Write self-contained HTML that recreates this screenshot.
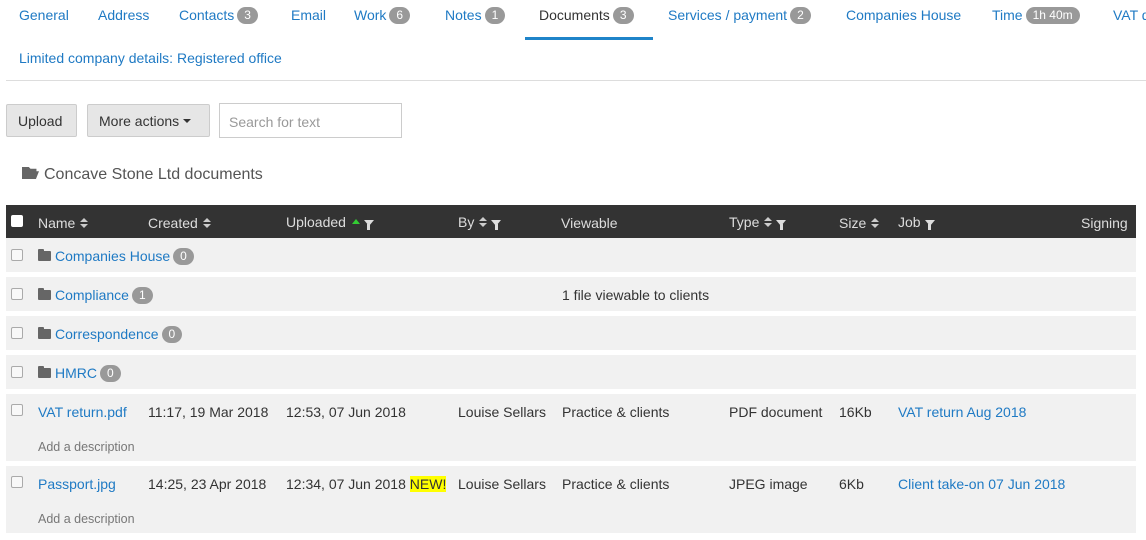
<!DOCTYPE html>
<html><head><meta charset="utf-8"><style>
*{margin:0;padding:0;box-sizing:border-box}
body{width:1146px;height:540px;overflow:hidden;background:#fff;font-family:"Liberation Sans",sans-serif;font-size:14px;color:#333;position:relative}
.a{position:absolute;white-space:nowrap;line-height:18px}
.l{color:#1f7ac4}
.b{display:inline-block;background:#999;color:#fff;border-radius:9px;font-size:12px;padding:0 7px;line-height:17px;vertical-align:1px;margin-left:3px}
.row{position:absolute;left:6px;width:1130px;background:#f1f1f1}
.cb{position:absolute;width:12px;height:12px;border:1px solid #aaa;border-radius:2px;background:#f8f8f8}
.h{color:#ddd}
.fold{display:inline-block;width:13px;height:10px;background:#666;border-radius:1px;margin-right:4px;vertical-align:0px;position:relative}
.fold:before{content:"";position:absolute;left:0;top:-2px;width:6px;height:3px;background:#666;border-radius:1px 1px 0 0}
.s{display:inline-block;width:8px;height:11px;margin-left:5px;vertical-align:-1px;position:relative}
.s:before{content:"";position:absolute;left:0;top:0;border-left:4px solid transparent;border-right:4px solid transparent;border-bottom:4px solid #ccc}
.s:after{content:"";position:absolute;left:0;top:6px;border-left:4px solid transparent;border-right:4px solid transparent;border-top:4px solid #ccc}
.f{display:inline-block;width:0;height:0;border-left:5px solid transparent;border-right:5px solid transparent;border-top:6px solid #ddd;margin-left:4px;vertical-align:1px;position:relative}
.f:after{content:"";position:absolute;left:-1.5px;top:-2px;width:3px;height:6px;background:#ddd}
.d{color:#777;font-size:12.5px}
</style></head><body>
<div class="a l" style="left:19px;top:6px">General</div>
<div class="a l" style="left:98px;top:6px">Address</div>
<div class="a l" style="left:179px;top:6px">Contacts<span class="b">3</span></div>
<div class="a l" style="left:291px;top:6px">Email</div>
<div class="a l" style="left:354px;top:6px">Work<span class="b">6</span></div>
<div class="a l" style="left:445px;top:6px">Notes<span class="b">1</span></div>
<div class="a" style="left:539px;top:6px;color:#333">Documents<span class="b">3</span></div>
<div style="position:absolute;left:525px;top:37px;width:128px;height:3px;background:#1f84c9"></div>
<div class="a l" style="left:668px;top:6px">Services / payment<span class="b">2</span></div>
<div class="a l" style="left:846px;top:6px">Companies House</div>
<div class="a l" style="left:992px;top:6px">Time<span class="b">1h 40m</span></div>
<div class="a l" style="left:1113px;top:6px">VAT d</div>
<div class="a l" style="left:19px;top:49px">Limited company details: Registered office</div>
<div style="position:absolute;left:6px;top:80px;width:1140px;height:1px;background:#ddd"></div>
<div style="position:absolute;left:6px;top:104px;width:71px;height:33px;background:#e6e6e6;border:1px solid #ccc;border-radius:2px"></div>
<div class="a" style="left:18px;top:112px">Upload</div>
<div style="position:absolute;left:87px;top:104px;width:123px;height:33px;background:#e6e6e6;border:1px solid #ccc;border-radius:2px"></div>
<div class="a" style="left:99px;top:112px">More actions <span style="display:inline-block;border-left:4px solid transparent;border-right:4px solid transparent;border-top:4px solid #333;vertical-align:3px"></span></div>
<div style="position:absolute;left:219px;top:103px;width:183px;height:35px;border:1px solid #ccc"></div>
<div class="a" style="left:229px;top:113px;color:#999">Search for text</div>
<div class="a" style="left:22px;top:165px;font-size:16px;color:#555;line-height:20px"><span style="display:inline-block;width:17px;height:12px;background:#666;margin-right:5px;vertical-align:0;clip-path:polygon(0 0,40% 0,50% 15%,85% 15%,85% 35%,100% 35%,82% 100%,0 100%)"></span>Concave Stone Ltd documents</div>
<div style="position:absolute;left:6px;top:205px;width:1130px;height:33px;background:#333"></div>
<div class="cb" style="left:11px;top:215px;background:#fff;border-color:#fff"></div>
<div class="a h" style="left:38px;top:214px">Name<span class="s"></span></div>
<div class="a h" style="left:148px;top:214px">Created<span class="s"></span></div>
<div class="a h" style="left:286px;top:213px">Uploaded <span style="display:inline-block;border-left:4px solid transparent;border-right:4px solid transparent;border-bottom:5px solid #3c3;vertical-align:3px;margin-left:2px"></span><span class="f"></span></div>
<div class="a h" style="left:458px;top:213px">By<span class="s"></span><span class="f"></span></div>
<div class="a h" style="left:561px;top:214px">Viewable</div>
<div class="a h" style="left:729px;top:213px">Type<span class="s"></span><span class="f"></span></div>
<div class="a h" style="left:839px;top:214px">Size<span class="s"></span></div>
<div class="a h" style="left:898px;top:213px">Job<span class="f"></span></div>
<div class="a h" style="left:1081px;top:214px">Signing</div>

<div class="row" style="top:238px;height:34px"></div>
<div class="cb" style="left:11px;top:249px"></div>
<div class="a l" style="left:38px;top:247px"><span class="fold"></span>Companies House<span class="b">0</span></div>
<div class="row" style="top:277px;height:34px"></div>
<div class="cb" style="left:11px;top:288px"></div>
<div class="a l" style="left:38px;top:286px"><span class="fold"></span>Compliance<span class="b">1</span></div>
<div class="a" style="left:562px;top:286px">1 file viewable to clients</div>
<div class="row" style="top:316px;height:34px"></div>
<div class="cb" style="left:11px;top:327px"></div>
<div class="a l" style="left:38px;top:325px"><span class="fold"></span>Correspondence<span class="b">0</span></div>
<div class="row" style="top:355px;height:34px"></div>
<div class="cb" style="left:11px;top:366px"></div>
<div class="a l" style="left:38px;top:364px"><span class="fold"></span>HMRC<span class="b">0</span></div>

<div class="row" style="top:394px;height:67px"></div>
<div class="cb" style="left:11px;top:404px"></div>
<div class="a l" style="left:38px;top:403px">VAT return.pdf</div>
<div class="a" style="left:148px;top:403px">11:17, 19 Mar 2018</div>
<div class="a" style="left:286px;top:403px">12:53, 07 Jun 2018</div>
<div class="a" style="left:458px;top:403px">Louise Sellars</div>
<div class="a" style="left:562px;top:403px">Practice &amp; clients</div>
<div class="a" style="left:729px;top:403px">PDF document</div>
<div class="a" style="left:839px;top:403px">16Kb</div>
<div class="a l" style="left:898px;top:403px">VAT return Aug 2018</div>
<div class="a d" style="left:38px;top:438px">Add a description</div>

<div class="row" style="top:466px;height:67px"></div>
<div class="cb" style="left:11px;top:476px"></div>
<div class="a l" style="left:38px;top:475px">Passport.jpg</div>
<div class="a" style="left:148px;top:475px">14:25, 23 Apr 2018</div>
<div class="a" style="left:286px;top:475px">12:34, 07 Jun 2018 <span style="background:#ff0">NEW!</span></div>
<div class="a" style="left:458px;top:475px">Louise Sellars</div>
<div class="a" style="left:562px;top:475px">Practice &amp; clients</div>
<div class="a" style="left:729px;top:475px">JPEG image</div>
<div class="a" style="left:839px;top:475px">6Kb</div>
<div class="a l" style="left:898px;top:475px">Client take-on 07 Jun 2018</div>
<div class="a d" style="left:38px;top:510px">Add a description</div>
</body></html>
